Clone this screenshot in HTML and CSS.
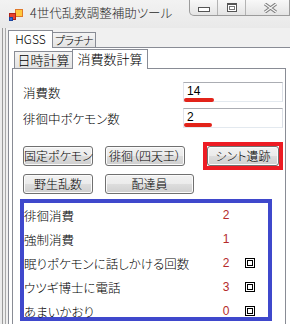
FILE: index.html
```html
<!DOCTYPE html>
<html>
<head>
    <meta charset="utf-8">
    <title>4世代乱数調整補助ツール</title>
    <link rel="stylesheet" href="styles.css">
</head>
<body>
    <div class="window">
        <div class="titlebar">
            <svg class="app-icon" width="14" height="12" viewBox="0 0 14 12">
                <rect x="6.5" y="0.5" width="7" height="7" fill="#ffc83d" stroke="#e0792a"/>
                <rect x="0.5" y="4.5" width="6" height="6" fill="#e8432e" stroke="#b02418"/>
                <rect x="0.5" y="8.5" width="3" height="3" fill="#3a6fd8" stroke="#1f46a0"/>
            </svg>
            <span class="title">4世代乱数調整補助ツール</span>
            <div class="caption">
                <div class="cap-btn"><span class="min-glyph"></span></div>
                <div class="cap-btn"><span class="max-glyph"></span></div>
                <div class="cap-btn close">
                    <svg width="17" height="10" viewBox="0 0 17 10">
                        <path d="M3 1 L14 9 M14 1 L3 9" stroke="#7d7d7d" stroke-width="3.4" fill="none"/>
                        <path d="M3 1 L14 9 M14 1 L3 9" stroke="#f4f4f4" stroke-width="1.4" fill="none"/>
                    </svg>
                </div>
            </div>
        </div>
        <div class="frame">
            <div class="client">
                <div class="tabs">
                    <div class="tab active hgss">HGSS</div>
                    <div class="tab platinum">プラチナ</div>
                </div>
                <div class="page outer-page">
                    <div class="tabs inner-tabs">
                        <div class="tab date-tab">日時計算</div>
                        <div class="tab active count-tab">消費数計算</div>
                    </div>
                    <div class="page inner-page">
                        <div class="form">
                            <div class="field">
                                <span class="field-label">消費数</span>
                                <div class="textbox">14<span class="mark mark-a"></span></div>
                            </div>
                            <div class="field">
                                <span class="field-label">徘徊中ポケモン数</span>
                                <div class="textbox">2<span class="mark mark-b"></span></div>
                            </div>
                        </div>

                        <div class="btn-row">
                            <button class="btn w70">固定ポケモン</button>
                            <button class="btn w80">徘徊（四天王）</button>
                            <div class="highlight"><button class="btn w72">シント遺跡</button></div>
                        </div>
                        <div class="btn-row">
                            <button class="btn w70">野生乱数</button>
                            <button class="btn w89">配達員</button>
                        </div>

                        <div class="summary">
                            <div class="sum-row">
                                <span>徘徊消費</span><span class="num">2</span><span></span>
                            </div>
                            <div class="sum-row">
                                <span>強制消費</span><span class="num">1</span><span></span>
                            </div>
                            <div class="sum-row">
                                <span>眠りポケモンに話しかける回数</span><span class="num">2</span><span class="box-icon"></span>
                            </div>
                            <div class="sum-row">
                                <span>ウツギ博士に電話</span><span class="num">3</span><span class="box-icon"></span>
                            </div>
                            <div class="sum-row">
                                <span>あまいかおり</span><span class="num">0</span><span class="box-icon"></span>
                            </div>
                        </div>
                    </div>
                </div>
            </div>
        </div>
    </div>
</body>
</html>
```

FILE: styles.css
```css
* {
    box-sizing: border-box;
}
body {
    margin: 0;
    width: 290px;
    height: 324px;
    overflow: hidden;
    background-color: #e4e4e4;
    font-family: "Noto Sans CJK JP", "Noto Sans", sans-serif;
    font-size: 12px;
    font-weight: 300;
    font-feature-settings: "palt";
    color: #000;
}
.window {
    width: 290px;
    height: 324px;
    overflow: hidden;
    background-color: #ececec;
}

/* title bar */
.titlebar {
    height: 28px;
    display: flex;
    align-items: flex-start;
    background: linear-gradient(#f2f2f2, #e9e9e9);
}
.app-icon {
    margin: 9px 0 0 9px;
}
.title {
    margin: 5px 0 0 7px;
    font-size: 12.5px;
    color: #2a2a2a;
    line-height: 16px;
}
.caption {
    margin-left: auto;
    display: flex;
    height: 16px;
    border: 1px solid #9b9b9b;
    border-top: none;
    border-radius: 0 0 0 5px;
    background: linear-gradient(#f8f8f8, #e4e4e4);
    overflow: hidden;
}
.cap-btn {
    width: 28px;
    display: flex;
    align-items: center;
    justify-content: center;
    border-left: 1px solid #b3b3b3;
}
.cap-btn:first-child {
    width: 27px;
    border-left: none;
}
.cap-btn.close {
    width: 44px;
    padding-left: 6px;
}
.min-glyph {
    width: 12px;
    height: 5px;
    margin-top: 4px;
    border: 1px solid #555;
    background: #fff;
}
.max-glyph {
    width: 10px;
    height: 9px;
    margin-top: -1px;
    border: 1px solid #555;
    border-top-width: 2px;
    background: #fff;
    box-shadow: inset 0 0 0 1px #fff, inset 0 0 0 2px #777;
}

/* window frame */
.frame {
    margin-left: 2px;
    padding-left: 2px;
    border-left: 1px solid #9a9a9a;
    height: 296px;
}
.client {
    padding-left: 2px;
    border-left: 1px solid #a9a9a9;
    height: 296px;
    overflow: hidden;
    background-color: #f0f0f0;
}

/* tabs */
.tabs {
    display: flex;
    align-items: flex-end;
    height: 19px;
}
.tab {
    display: flex;
    align-items: center;
    justify-content: center;
    height: 15px;
    padding-bottom: 1px;
    border: 1px solid #898c95;
    border-bottom: none;
    background: linear-gradient(#f4f4f4, #e3e3e3);
    white-space: nowrap;
}
.tab.active {
    position: relative;
    z-index: 1;
    height: 18px;
    margin-bottom: -1px;
    background: #fff;
    padding-bottom: 2px;
}
.hgss {
    width: 45px;
}
.platinum {
    width: 44px;
    margin-left: -1px;
    font-size: 11px;
    letter-spacing: -0.5px;
}
.page {
    border: 1px solid #898c95;
    background-color: #fff;
}
.outer-page {
    width: 300px;
    height: 280px;
}
.inner-tabs {
    height: 20px;
    margin-left: 5px;
}
.inner-tabs .tab {
    height: 17px;
    font-size: 13px;
}
.inner-tabs .tab.active {
    height: 20px;
    padding-bottom: 3px;
}
.date-tab {
    width: 59px;
}
.count-tab {
    width: 76px;
    margin-left: -1px;
}
.inner-page {
    margin-left: 3px;
    width: 274px;
    height: 260px;
    padding: 13px 0 0 10px;
}

/* inputs */
.form {
    display: flex;
    flex-direction: column;
    gap: 6px;
}
.field {
    display: flex;
    align-items: center;
    height: 20px;
}
.field-label {
    width: 160px;
    font-size: 12.5px;
}
.textbox {
    position: relative;
    width: 100px;
    height: 20px;
    padding: 1px 0 0 3px;
    border: 1px solid;
    border-color: #abadb3 #dbdfe6 #e3e9ef #e2e3ea;
    font-family: "Liberation Sans", sans-serif;
    font-weight: 400;
    font-size: 12px;
    line-height: 15px;
}
.mark {
    position: absolute;
    left: 0;
    height: 4px;
    border-radius: 2px;
    background-color: #e2231a;
}
.mark-a {
    top: 15px;
    width: 30px;
}
.mark-b {
    top: 14px;
    width: 28px;
}

/* buttons */
.btn-row {
    display: flex;
    height: 20px;
    margin-top: 18px;
}
.btn-row + .btn-row {
    margin-top: 8px;
}
.btn {
    height: 20px;
    padding: 0;
    margin-right: 12px;
    border: 1px solid #707070;
    border-radius: 3px;
    background: linear-gradient(#f2f2f2 0%, #ebebeb 50%, #dddddd 50%, #cfcfcf 100%);
    box-shadow: inset 0 0 0 1px #fbfbfb;
    font-family: inherit;
    font-size: 12px;
    font-weight: 300;
    font-feature-settings: "palt";
    line-height: 16px;
    white-space: nowrap;
    color: #000;
}
.w70 { width: 70px; }
.w80 { width: 80px; margin-right: 22px; }
.w72 { width: 72px; margin-right: 0; }
.w89 { width: 89px; }
.highlight {
    display: flex;
    margin: -4px;
    border: 4px solid #ed1c24;
}

/* result list */
.summary {
    margin: 5px 0 0 -3px;
    width: 252px;
    height: 122px;
    border: 4px solid #3f48cc;
    font-size: 12.5px;
}
.sum-row {
    display: grid;
    grid-template-columns: 196px 12px 23px;
    align-items: center;
    height: 24px;
    white-space: nowrap;
}
.num {
    text-align: center;
    color: #b42a2a;
    font-family: "Liberation Sans", sans-serif;
    font-weight: 400;
    font-size: 12px;
}
.box-icon {
    justify-self: end;
    width: 10px;
    height: 10px;
    border: 1px solid #000;
    display: flex;
    align-items: center;
    justify-content: center;
}
.box-icon::after {
    content: "";
    width: 4px;
    height: 4px;
    border: 1px solid #000;
}
```
